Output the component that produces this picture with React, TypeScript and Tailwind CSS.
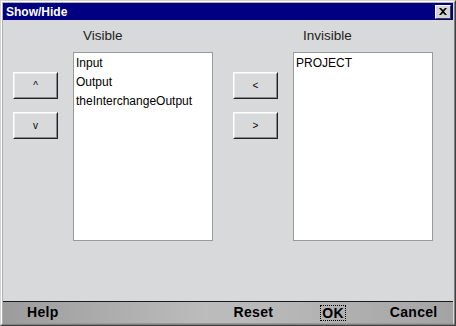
import React from "react";

function Btn({ label }: { label: string }) {
  return (
    <div className="w-[45px] h-[27px] border border-t-white border-l-white border-r-[#202020] border-b-[#202020] bg-[#d8d9db]">
      <div className="w-full h-full border border-t-[#ececec] border-l-[#ececec] border-r-[#8a8a8a] border-b-[#8a8a8a] flex items-center justify-center text-[10px] text-black leading-none">
        {label}
      </div>
    </div>
  );
}

function ListCol({ title, items }: { title: string; items: string[] }) {
  return (
    <div className="flex flex-col w-[140px]">
      <div className="h-[32px] flex items-center pl-[10px] text-[13.5px] text-[#222]">{title}</div>
      <div className="h-[189px] bg-white border border-[#9a9a9a] pl-[2px] pt-[1px] text-[12px] leading-[19px] text-black">
        {items.map((t) => (
          <div key={t}>{t}</div>
        ))}
      </div>
    </div>
  );
}

export default function App() {
  return (
    <div
      className="w-[456px] h-[326px] border border-t-[#d4d4d4] border-l-[#d4d4d4] border-r-[#404040] border-b-[#404040]"
      style={{ fontFamily: '"Liberation Sans", Arial, sans-serif' }}
    >
      <div className="w-full h-full border border-t-white border-l-white border-r-[#808080] border-b-[#808080]">
        <div className="w-full h-full border border-t-[#b0b0b0] border-l-[#b0b0b0] border-r-[#d8d9db] border-b-[#9a9a9a] flex flex-col bg-[#d8d9db]">
          <div className="h-[17px] bg-[#000080] flex items-center justify-between pl-[3px] pr-[2px]">
            <span className="text-white font-bold text-[12px] leading-none">Show/Hide</span>
            <div className="w-[16px] h-[14px] bg-[#d4d4d4] border border-t-white border-l-white border-r-[#404040] border-b-[#404040] flex items-center justify-center">
              <svg width="8" height="7" viewBox="0 0 8 7">
                <path d="M0 0 L2 0 L4 2 L6 0 L8 0 L5 3.5 L8 7 L6 7 L4 5 L2 7 L0 7 L3 3.5 Z" fill="#000" />
              </svg>
            </div>
          </div>
          <div className="h-[281px] flex flex-row">
            <div className="ml-[10px] mt-[52px] flex flex-col gap-[13px]">
              <Btn label="^" />
              <Btn label="v" />
            </div>
            <div className="ml-[15px]">
              <ListCol title="Visible" items={["Input", "Output", "theInterchangeOutput"]} />
            </div>
            <div className="ml-[20px] mt-[52px] flex flex-col gap-[13px]">
              <Btn label="<" />
              <Btn label=">" />
            </div>
            <div className="ml-[15px]">
              <ListCol title="Invisible" items={["PROJECT"]} />
            </div>
          </div>
          <div className="h-[1px] bg-[#1a1a1a]" />
          <div className="flex-1 flex items-center bg-[linear-gradient(to_right,#9c9c9c_0%,#bcbcbc_45%,#b8b8b8_60%,#a4a4a4_100%)] text-[14px] font-bold text-black tracking-[0.3px]">
            <span className="ml-[24px]">Help</span>
            <span className="ml-[175px]">Reset</span>
            <span className="ml-[47px] border border-dotted border-black px-[1px] leading-[14px]">OK</span>
            <span className="ml-[44px]">Cancel</span>
          </div>
        </div>
      </div>
    </div>
  );
}
